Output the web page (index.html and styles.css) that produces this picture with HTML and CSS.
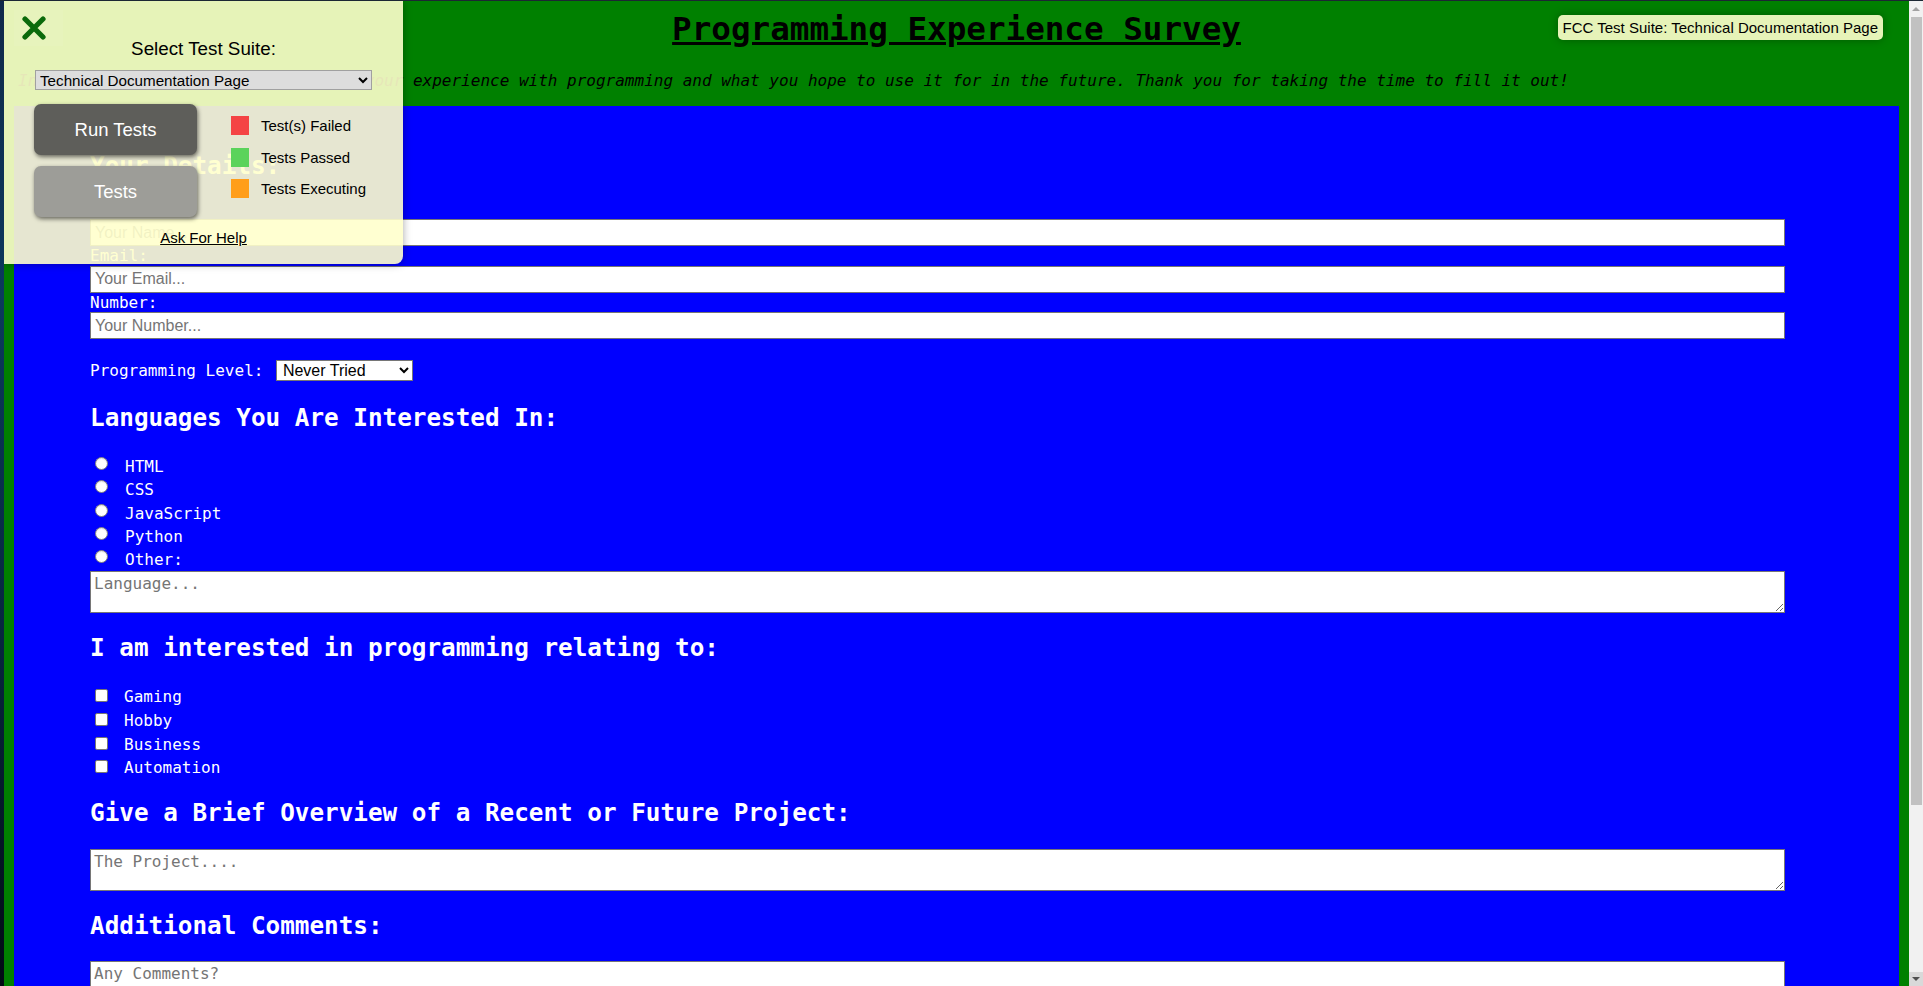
FILE: index.html
```html
<!DOCTYPE html>
<html lang="en">
<head>
<meta charset="utf-8">
<title>Programming Experience Survey</title>
<link rel="stylesheet" href="styles.css">
</head>
<body>
<div class="screen">
  <div class="page">
    <header class="hero">
      <h1 class="hero-title" id="title">Programming Experience Survey</h1>
      <p class="hero-intro" id="description">In this survey I want to know about your experience with programming and what you hope to use it for in the future. Thank you for taking the time to fill it out!</p>
    </header>

    <form class="survey" id="survey-form">
      <h2 class="section-title section-first">Your Details:</h2>
      <label class="field-label" for="name" id="name-label">Name:</label>
      <input class="text-input" id="name" type="text" placeholder="Your Name...">
      <label class="field-label" for="email" id="email-label">Email:</label>
      <input class="text-input" id="email" type="email" placeholder="Your Email...">
      <label class="field-label" for="number" id="number-label">Number:</label>
      <input class="text-input" id="number" type="text" placeholder="Your Number...">

      <div class="level-row">
        <label for="dropdown">Programming Level:</label>
        <select class="level-select" id="dropdown">
          <option>Never Tried</option>
          <option>Beginner</option>
          <option>Intermediate</option>
          <option>Advanced</option>
        </select>
      </div>

      <h2 class="section-title section-langs">Languages You Are Interested In:</h2>
      <div class="choice-list radio-list">
        <label class="choice"><input class="radio" type="radio" name="lang" value="html"><span class="choice-text">HTML</span></label>
        <label class="choice"><input class="radio" type="radio" name="lang" value="css"><span class="choice-text">CSS</span></label>
        <label class="choice"><input class="radio" type="radio" name="lang" value="js"><span class="choice-text">JavaScript</span></label>
        <label class="choice"><input class="radio" type="radio" name="lang" value="python"><span class="choice-text">Python</span></label>
        <label class="choice"><input class="radio" type="radio" name="lang" value="other"><span class="choice-text">Other:</span></label>
      </div>
      <textarea class="text-area" placeholder="Language..."></textarea>

      <h2 class="section-title section-interest">I am interested in programming relating to:</h2>
      <div class="choice-list check-list">
        <label class="choice"><input class="check" type="checkbox" value="gaming"><span class="choice-text">Gaming</span></label>
        <label class="choice"><input class="check" type="checkbox" value="hobby"><span class="choice-text">Hobby</span></label>
        <label class="choice"><input class="check" type="checkbox" value="business"><span class="choice-text">Business</span></label>
        <label class="choice"><input class="check" type="checkbox" value="automation"><span class="choice-text">Automation</span></label>
      </div>

      <h2 class="section-title section-project">Give a Brief Overview of a Recent or Future Project:</h2>
      <textarea class="text-area text-area-spaced" placeholder="The Project...."></textarea>

      <h2 class="section-title section-comments">Additional Comments:</h2>
      <textarea class="text-area text-area-spaced" placeholder="Any Comments?"></textarea>
    </form>

    <div class="fcc-badge">FCC Test Suite: Technical Documentation Page</div>

    <aside class="fcc-panel">
      <button class="fcc-close" type="button" aria-label="Close">
        <svg width="24" height="24" viewBox="0 0 24 24" aria-hidden="true">
          <path d="M3 3 L21 21 M21 3 L3 21" stroke="#0b6a0b" stroke-width="5.2" stroke-linecap="round" fill="none"/>
        </svg>
      </button>
      <p class="fcc-heading">Select Test Suite:</p>
      <select class="fcc-select">
        <option>Technical Documentation Page</option>
      </select>
      <div class="fcc-controls">
        <div class="fcc-buttons">
          <button class="fcc-btn fcc-btn-run" type="button">Run Tests</button>
          <button class="fcc-btn fcc-btn-tests" type="button">Tests</button>
        </div>
        <ul class="fcc-legend">
          <li><span class="swatch swatch-fail"></span>Test(s) Failed</li>
          <li><span class="swatch swatch-pass"></span>Tests Passed</li>
          <li><span class="swatch swatch-run"></span>Tests Executing</li>
        </ul>
      </div>
      <a class="fcc-help" href="#">Ask For Help</a>
    </aside>
  </div>

  <div class="scrollbar" aria-hidden="true">
    <span class="sb-btn sb-up"></span>
    <span class="sb-thumb"></span>
    <span class="sb-track"></span>
    <span class="sb-btn sb-down"></span>
  </div>
</div>
</body>
</html>
```

FILE: styles.css
```css
* {
  box-sizing: border-box;
}

html,
body {
  margin: 0;
  height: 100%;
}

body {
  overflow: hidden;
  font-family: "DejaVu Sans Mono", monospace;
  background: linear-gradient(180deg, #10284a 0%, #0b3a5c 30%, #07263e 65%, #020b14 100%);
}

.screen {
  display: flex;
  height: 986px;
  padding-left: 4px;
  border-top: 1px solid #1c2733;
}

/* ---------- page ---------- */
.page {
  position: relative;
  flex: 1;
  min-width: 0;
  overflow: hidden;
  background: #008000;
  padding: 0 10px;
}

.hero-title {
  margin: 10px 0 0;
  font-size: 32.6px;
  line-height: 37px;
  font-weight: bold;
  text-align: center;
  text-decoration: underline;
  color: #000;
}

.hero-intro {
  margin: 22.5px 0 0 4px;
  font-size: 16px;
  line-height: 19px;
  font-style: italic;
  white-space: nowrap;
  color: #000;
}

/* ---------- form ---------- */
.survey {
  margin-top: 16.5px;
  background: #0000ff;
  color: #fff;
  padding: 46px 114px 60px 76px;
}

.section-title {
  margin: 0;
  font-size: 24.3px;
  line-height: 28px;
  font-weight: bold;
}

.section-langs {
  margin-top: 23px;
}

.section-interest {
  margin-top: 20.5px;
}

.section-project {
  margin-top: 18.5px;
}

.section-comments {
  margin-top: 21px;
}

.field-label {
  display: block;
  font-size: 16px;
  line-height: 19.5px;
}

.section-first + .field-label {
  margin-top: 19.5px;
}

.text-input {
  display: block;
  width: 100%;
  height: 27px;
  margin: 0;
  padding: 0 4px;
  border: 1px solid #767676;
  background: #fff;
  font-family: "Liberation Sans", Arial, sans-serif;
  font-size: 16px;
  color: #000;
}

.text-input::placeholder,
.text-area::placeholder {
  color: #757575;
}

.level-row {
  display: flex;
  align-items: center;
  height: 21px;
  margin-top: 21px;
  font-size: 16px;
}

.level-select {
  margin-left: 12.5px;
  width: 137px;
  height: 21px;
  padding: 0 0 0 2px;
  border: 1px solid #767676;
  border-radius: 0;
  background: #fff;
  font-family: "Liberation Sans", Arial, sans-serif;
  font-size: 16px;
  color: #000;
}

.choice-list {
  margin-top: 23px;
}

.choice {
  display: flex;
  align-items: flex-start;
  font-size: 16px;
}

.radio-list .choice {
  height: 23.3px;
  line-height: 23.3px;
}

.check-list .choice {
  height: 23.8px;
  line-height: 23.8px;
}

.radio,
.check {
  -webkit-appearance: none;
  appearance: none;
  flex: none;
  width: 13px;
  height: 13px;
  margin: 2px 0 0 5px;
  border: 1px solid #808080;
  background: #fff;
}

.radio {
  border-radius: 50%;
  box-shadow: inset 0 1px 1px rgba(0, 0, 0, 0.12);
}

.check {
  margin-top: 4px;
  border-color: #767676;
  border-radius: 2px;
}

.choice-text {
  margin-left: 17px;
}

.check-list .choice-text {
  margin-left: 16px;
}

.text-area {
  display: block;
  width: 100%;
  height: 42px;
  margin: 0;
  padding: 2px 3px;
  border: 1px solid #767676;
  background: #fff;
  font-family: "DejaVu Sans Mono", monospace;
  font-size: 16px;
  color: #000;
}

.text-area-spaced {
  margin-top: 22px;
}

.section-comments + .text-area-spaced {
  margin-top: 21px;
}

/* ---------- FCC badge ---------- */
.fcc-badge {
  position: absolute;
  top: 14px;
  right: 26px;
  height: 25px;
  padding: 0 5px;
  border-radius: 5px;
  background: rgba(255, 255, 204, 0.9);
  box-shadow: 0 0 10px rgba(0, 0, 0, 0.3);
  font-family: "Liberation Sans", Arial, sans-serif;
  font-size: 15px;
  line-height: 25px;
  color: #000;
  white-space: nowrap;
}

/* ---------- FCC panel ---------- */
.fcc-panel {
  position: absolute;
  top: 0;
  left: 0;
  width: 399px;
  height: 263px;
  display: flex;
  flex-direction: column;
  background: rgba(255, 255, 204, 0.9);
  border-radius: 0 0 8px 0;
  box-shadow: 0 0 8px rgba(0, 0, 0, 0.35);
  font-family: "Liberation Sans", Arial, sans-serif;
  color: #000;
}

.fcc-close {
  position: absolute;
  top: 9px;
  left: 10px;
  width: 49px;
  height: 36px;
  padding: 0 0 0 8px;
  border: 0;
  background: rgba(255, 255, 255, 0.06);
  display: flex;
  align-items: center;
  justify-content: flex-start;
}

.fcc-heading {
  margin: 36.5px 0 0;
  font-size: 18.8px;
  line-height: 21px;
  text-align: center;
}

.fcc-select {
  margin: 11.5px 0 0 31px;
  width: 337px;
  height: 20px;
  padding: 0;
  border: 1px solid #a0a0a0;
  border-radius: 0;
  background: #dddddd;
  font-family: "Liberation Sans", Arial, sans-serif;
  font-size: 15.2px;
  color: #000;
}

.fcc-controls {
  display: flex;
  margin-top: 14px;
}

.fcc-buttons {
  display: flex;
  flex-direction: column;
  gap: 11px;
  width: 163px;
  margin-left: 30px;
}

.fcc-btn {
  height: 51px;
  padding: 0;
  border: 0;
  border-radius: 7px;
  color: #fff;
  font-family: "Liberation Sans", Arial, sans-serif;
  font-size: 18.5px;
  box-shadow: 1px 2px 4px rgba(0, 0, 0, 0.55);
}

.fcc-btn-run {
  background: #5e5e5a;
}

.fcc-btn-tests {
  background: #9d9d98;
}

.fcc-legend {
  list-style: none;
  margin: 0 0 0 34px;
  padding: 12px 0 0;
  display: flex;
  flex-direction: column;
  gap: 12.5px;
}

.fcc-legend li {
  display: flex;
  align-items: center;
  height: 19px;
  font-size: 15px;
  white-space: nowrap;
}

.swatch {
  width: 18px;
  height: 19px;
  margin-right: 12px;
  flex: none;
}

.swatch-fail {
  background: #f44444;
}

.swatch-pass {
  background: #5bd35b;
}

.swatch-run {
  background: #ff9e1a;
}

.fcc-help {
  margin: 11.5px auto 0;
  font-size: 15px;
  line-height: 17px;
  color: #000;
  text-decoration: underline;
}

/* ---------- scrollbar ---------- */
.scrollbar {
  width: 14px;
  flex: none;
  display: flex;
  flex-direction: column;
  background: #f1f1f1;
}

.sb-btn {
  display: flex;
  align-items: center;
  justify-content: center;
  flex: none;
}

.sb-up {
  height: 15px;
}

.sb-up::before {
  content: "";
  border-left: 4px solid transparent;
  border-right: 4px solid transparent;
  border-bottom: 4px solid #a3a3a3;
}

.sb-thumb {
  height: 788px;
  margin: 1px 1px 0 2px;
  background: #c1c1c1;
  flex: none;
}

.sb-track {
  flex: 1;
}

.sb-down {
  height: 14px;
  background: #d9d9d9;
}

.sb-down::before {
  content: "";
  border-left: 4px solid transparent;
  border-right: 4px solid transparent;
  border-top: 4px solid #505050;
}
```
